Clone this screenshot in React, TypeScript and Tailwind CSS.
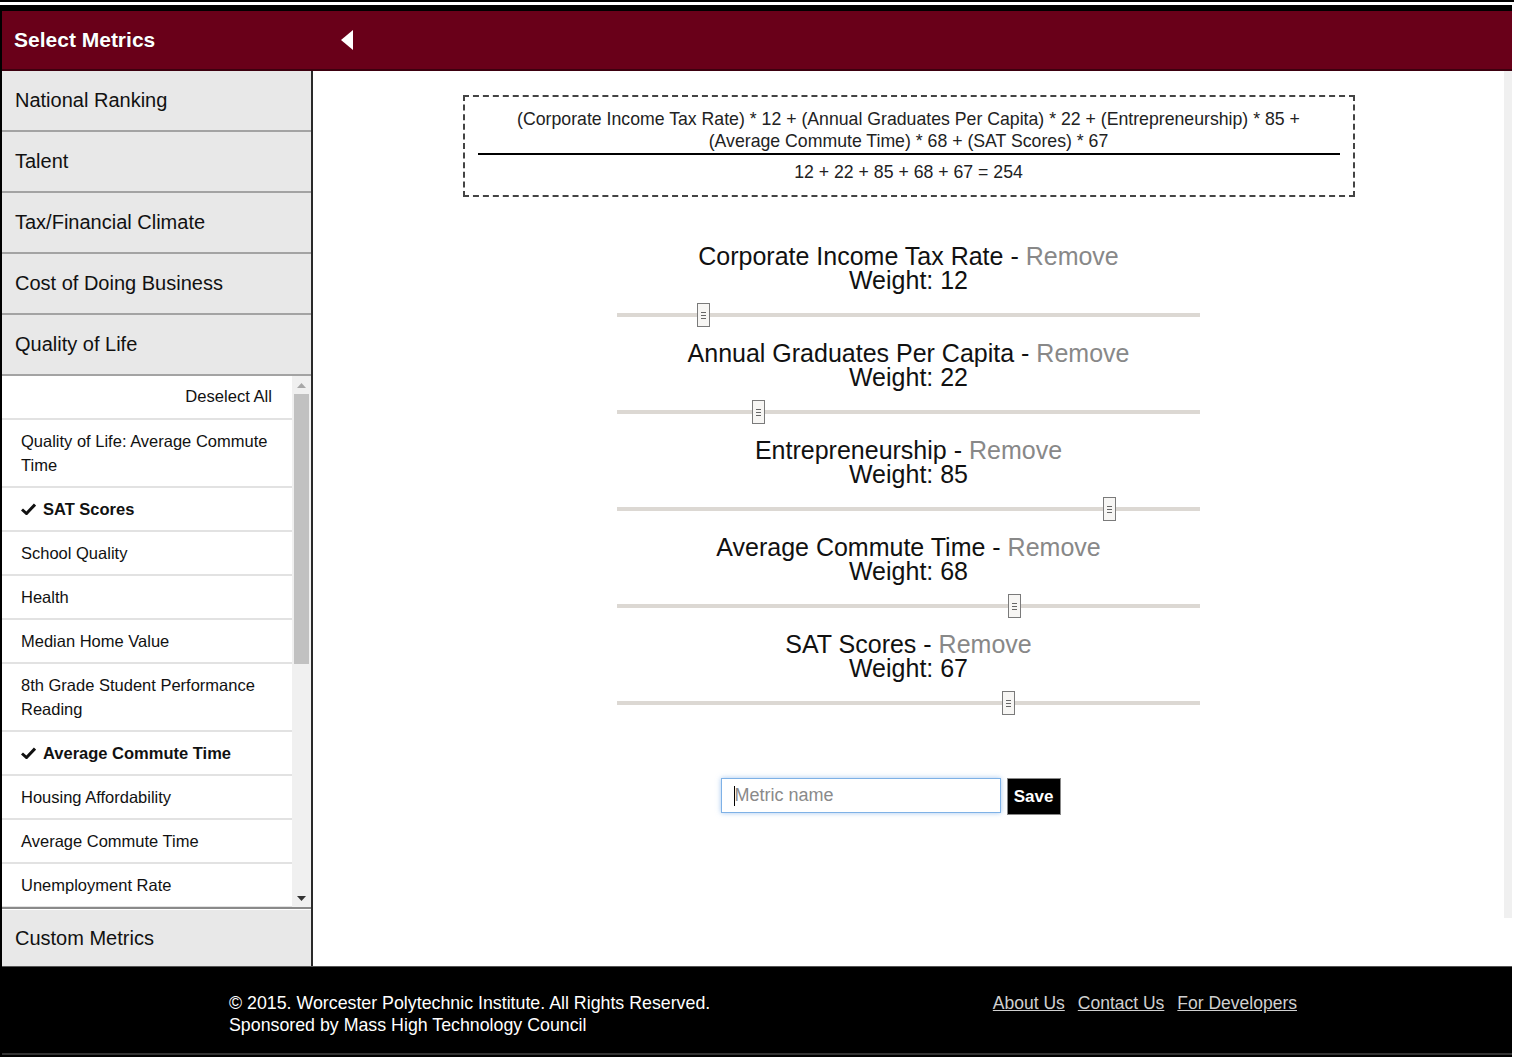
import React from "react";

const categories = ["National Ranking", "Talent", "Tax/Financial Climate", "Cost of Doing Business", "Quality of Life"];

const subItems: { label: string; checked?: boolean }[] = [
  { label: "Quality of Life: Average Commute Time" },
  { label: "SAT Scores", checked: true },
  { label: "School Quality" },
  { label: "Health" },
  { label: "Median Home Value" },
  { label: "8th Grade Student Performance Reading" },
  { label: "Average Commute Time", checked: true },
  { label: "Housing Affordability" },
  { label: "Average Commute Time" },
  { label: "Unemployment Rate" },
];

const metrics = [
  { name: "Corporate Income Tax Rate", w: 12 },
  { name: "Annual Graduates Per Capita", w: 22 },
  { name: "Entrepreneurship", w: 85 },
  { name: "Average Commute Time", w: 68 },
  { name: "SAT Scores", w: 67 },
];

function Check() {
  return (
    <svg width="15" height="12" viewBox="0 0 15 12" className="mr-[7px] shrink-0">
      <path d="M1 6.5 L5.5 10.5 L14 1.5" fill="none" stroke="#111" strokeWidth="3" strokeLinejoin="miter" />
    </svg>
  );
}

function Slider({ value }: { value: number }) {
  const center = 19.3 + 5.562 * value;
  return (
    <div className="relative w-[583px] h-[49px] mx-auto">
      <div className="absolute left-0 right-0 top-[21px] h-[4px] bg-[#dcd8d3]" />
      <div
        className="absolute top-[11px] w-[13px] h-[24px] bg-[#f7f6f4] border border-[#7a7a7a] flex flex-col items-center justify-center gap-[2px]"
        style={{ left: center - 6.5 }}
      >
        <div className="w-[5px] h-px bg-[#666]" />
        <div className="w-[5px] h-px bg-[#666]" />
        <div className="w-[5px] h-px bg-[#666]" />
      </div>
    </div>
  );
}

export default function App() {
  return (
    <div
      className="w-[1514px] h-[1057px] bg-white flex flex-col overflow-hidden text-[#111]"
      style={{ fontFamily: '"Liberation Sans", Arial, sans-serif' }}
    >
      <div className="h-[2px] bg-black shrink-0" />
      <div className="h-[3px] bg-white shrink-0" />
      <div className="h-[6px] bg-black shrink-0 mr-[2px]" />
      <div className="flex-1 flex flex-col border-l-2 border-black mr-[2px] min-h-0">
        {/* Header */}
        <div className="h-[60px] shrink-0 bg-[#690019] border-b-2 border-[#3d000f] flex items-center">
          <div className="w-[338px] pl-[12px] text-white font-bold text-[21px]" style={{ textShadow: "0 0 1px rgba(0,0,0,0.6)" }}>
            Select Metrics
          </div>
          <svg width="14" height="22" viewBox="0 0 14 22">
            <polygon points="13,1 13,21 1,11" fill="#ffffff" />
          </svg>
        </div>

        {/* Body */}
        <div className="flex-1 flex min-h-0">
          {/* Sidebar */}
          <div className="w-[311px] shrink-0 border-r-2 border-[#2a2a2a] flex flex-col">
            {categories.map((c) => (
              <div key={c} className="h-[61px] shrink-0 bg-[#e8e8e8] border-b-2 border-[#a3a3a3] flex items-center pl-[13px] pb-[2px] text-[20px] text-[#111]">
                {c}
              </div>
            ))}
            <div className="h-[533px] shrink-0 flex border-b-2 border-[#8a8a8a] bg-white">
              <div className="flex-1 overflow-hidden">
                <div className="h-[44px] border-b-2 border-[#e2e2e2] flex items-center justify-end pr-[20px] text-[16.6px]">
                  Deselect All
                </div>
                {subItems.map((s, i) => (
                  <div
                    key={i}
                    className={`py-[9px] leading-[24px] pl-[19px] pr-[8px] border-b-2 border-[#e2e2e2] text-[16.5px] flex items-center ${s.checked ? "font-bold" : ""}`}
                  >
                    {s.checked && <Check />}
                    <span>{s.label}</span>
                  </div>
                ))}
              </div>
              <div className="w-[19px] shrink-0 bg-[#f0f0f0] flex flex-col items-center">
                <div className="h-[18px] flex items-center justify-center">
                  <svg width="9" height="5" viewBox="0 0 9 5"><polygon points="0,5 9,5 4.5,0" fill="#a8a8a8" /></svg>
                </div>
                <div className="w-[15px] h-[270px] bg-[#c1c1c1]" />
                <div className="flex-1" />
                <div className="h-[18px] flex items-center justify-center">
                  <svg width="9" height="5" viewBox="0 0 9 5"><polygon points="0,0 9,0 4.5,5" fill="#333" /></svg>
                </div>
              </div>
            </div>
            <div className="flex-1 bg-[#e8e8e8] flex items-center pl-[13px] text-[20px] text-[#111] border-t border-white">
              Custom Metrics
            </div>
          </div>

          {/* Main */}
          <div className="flex-1 flex min-w-0">
            <div className="flex-1 flex flex-col items-center pt-[24px]">
              <div className="w-[892px] border-2 border-dashed border-[#444] px-[13px] pt-[11px] pb-[12px] text-[17.7px] text-center text-[#222]">
                <div className="leading-[22px] px-[20px]">
                  (Corporate Income Tax Rate) * 12 + (Annual Graduates Per Capita) * 22 + (Entrepreneurship) * 85 + (Average Commute Time) * 68 + (SAT Scores) * 67
                </div>
                <div className="h-[2px] bg-black mt-[1px] mb-[6px]" />
                <div className="leading-[22px]">12 + 22 + 85 + 68 + 67 = 254</div>
              </div>

              <div className="mt-[47px] w-full flex flex-col">
                {metrics.map((m) => (
                  <div key={m.name} className="flex flex-col items-center">
                    <div className="text-[25px] leading-[24px] text-[#111]">
                      {m.name} - <span className="text-[#888]">Remove</span>
                    </div>
                    <div className="text-[25px] leading-[24px] text-[#111]">Weight: {m.w}</div>
                    <Slider value={m.w} />
                  </div>
                ))}
              </div>

              <div className="mt-[49px] mr-[36px] flex items-start gap-[6px]">
                <div className="relative">
                  <input
                    placeholder="Metric name"
                    className="w-[280px] h-[35px] border border-[#7eb1e6] shadow-[0_0_5px_rgba(102,160,230,0.6)] pl-[13px] text-[18px] placeholder:text-[#8a8a8a] outline-none bg-white"
                    style={{ fontFamily: '"Liberation Sans", Arial, sans-serif' }}
                  />
                  <div className="absolute left-[13px] top-[8px] w-px h-[20px] bg-black" />
                </div>
                <button className="w-[54px] h-[37px] bg-black text-white font-bold text-[17px] border border-[#888]">
                  Save
                </button>
              </div>
            </div>
            <div className="w-[8px] shrink-0 flex flex-col">
              <div className="h-[847px] bg-[#f0f0f0]" />
            </div>
          </div>
        </div>

        {/* Footer */}
        <div className="h-[91px] shrink-0 bg-black border-t border-[#555] flex flex-col">
          <div className="flex-1 flex justify-between pl-[227px] pr-[215px] pt-[25px]">
            <div className="text-white text-[17.8px] leading-[22px]">
              <div>© 2015. Worcester Polytechnic Institute. All Rights Reserved.</div>
              <div>Sponsored by Mass High Technology Council</div>
            </div>
            <div className="flex gap-[13px] text-[17.5px] leading-[22px] text-[#d0d0d0] -ml-[4px]">
              <a className="underline">About Us</a>
              <a className="underline">Contact Us</a>
              <a className="underline">For Developers</a>
            </div>
          </div>
          <div className="h-[2px] bg-[#333] mb-[2px]" />
        </div>
      </div>
    </div>
  );
}
